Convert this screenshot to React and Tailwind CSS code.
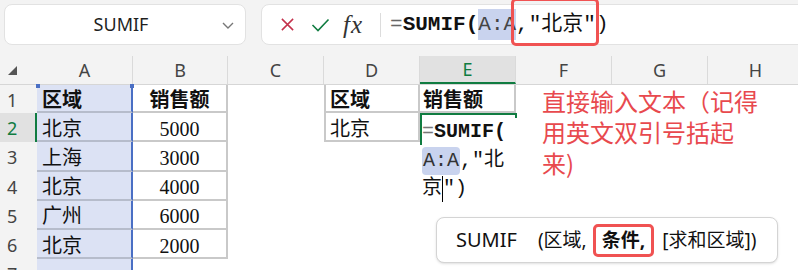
import React from "react";

const serif = "font-['Liberation_Serif','Noto_Sans_CJK_SC',serif]";
const mono = "font-['Liberation_Mono','Noto_Sans_CJK_SC',monospace]";
const sans = "font-['Noto_Sans','Noto_Sans_CJK_SC',sans-serif]";

const COLS = [
  { key: "A", w: "w-[96px]" },
  { key: "B", w: "w-[95px]" },
  { key: "C", w: "w-[96px]" },
  { key: "D", w: "w-[96px]" },
  { key: "E", w: "w-[96px]" },
  { key: "F", w: "w-[96px]" },
  { key: "G", w: "w-[96px]" },
  { key: "H", w: "w-[96px]" },
];

const ROWS = [
  { n: 1, h: "h-[28px]", A: "区域", B: "销售额", D: "区域", E: "销售额" },
  { n: 2, h: "h-[29.25px]", A: "北京", B: "5000", D: "北京" },
  { n: 3, h: "h-[29.25px]", A: "上海", B: "3000" },
  { n: 4, h: "h-[29.25px]", A: "北京", B: "4000" },
  { n: 5, h: "h-[29.25px]", A: "广州", B: "6000" },
  { n: 6, h: "h-[29.25px]", A: "北京", B: "2000" },
  { n: 7, h: "h-[29.25px]" },
];

function TopBar() {
  return (
    <div className="flex h-[56px] bg-[#f3f3f3] pt-[4px] pl-[4px]">
      {/* name box */}
      <div className="flex h-[41px] w-[242px] shrink-0 items-center rounded-[8px] border border-[#e2e2e2] bg-white">
        <span className={`${sans} flex-1 pl-[16px] text-center text-[18px] text-[#1f1f1f]`}>SUMIF</span>
        <svg className="mr-[10px]" width="14" height="10" viewBox="0 0 14 10">
          <path d="M2 3 L7 8 L12 3" fill="none" stroke="#777" strokeWidth="1.4" />
        </svg>
      </div>
      {/* formula bar */}
      <div className="ml-[15px] flex h-[41px] w-[600px] shrink-0 items-center rounded-[8px] border border-[#e2e2e2] bg-white">
        <svg className="ml-[18px]" width="15" height="15" viewBox="0 0 16 16">
          <path d="M2 2 L14 14 M14 2 L2 14" stroke="#c4314b" strokeWidth="1.6" />
        </svg>
        <svg className="ml-[16px]" width="19" height="16" viewBox="0 0 19 16">
          <path d="M1.5 8 L7 13.5 L17.5 2.5" fill="none" stroke="#107c41" strokeWidth="1.6" />
        </svg>
        <span className="ml-[13px] font-['Liberation_Serif',serif] text-[25px] italic leading-none text-[#333] tracking-[1px]">fx</span>
        <div className="ml-[17px] h-[24px] w-px bg-[#dcdcdc]" />
        <div className={`${mono} ml-[9px] flex items-center text-[21px] text-[#111]`}>
          <span className="text-[#666] font-normal">=</span>
          <span className="font-bold">SUMIF(</span>
          <span className="bg-[#c9d3ee] text-[#444]">A:A</span>
          <span className="relative">
            ,"北京"
            <span className="absolute -top-[11px] -bottom-[6px] -left-[5px] -right-[3px] rounded-[5px] border-[3px] border-[#f05252]" />
          </span>
          <span>)</span>
        </div>
      </div>
    </div>
  );
}

function HeaderRow() {
  return (
    <div className="flex h-[29px] border-b border-[#d6d6d6] bg-[#f3f3f3]">
      <div className="flex w-[37px] shrink-0 items-end pb-[9px] pl-[8px]">
        <svg width="9" height="9" viewBox="0 0 9 9">
          <polygon points="9,0 9,9 0,9" fill="#555" />
        </svg>
      </div>
      {COLS.map((c) => {
        const active = c.key === "E";
        return (
          <div
            key={c.key}
            className={`${c.w} ${sans} flex shrink-0 items-center justify-center border-r border-[#dadada] text-[18px] ${
              active ? "border-b-2 border-b-[#107c41] bg-[#e1e1e1] text-[#107c41]" : "text-[#444]"
            }`}
          >
            {c.key}
          </div>
        );
      })}
    </div>
  );
}

function Cell({ row, col }) {
  const v = row[col.key];
  const bold = row.n === 1;
  const text = `${serif} text-[20px] text-[#111] ${bold ? "font-bold" : ""}`;

  if (col.key === "A") {
    return (
      <div
        className={`${col.w} relative flex shrink-0 items-center bg-[#dce2f4] pl-[5px] pt-[4px] border-r-2 border-r-[#4a6fc4] ${
          row.n <= 6 ? "border-b-2 border-b-[#b6bccb]" : ""
        } ${text}`}
      >
        {v}
        {row.n === 1 && (
          <>
            <span className="absolute -left-[1px] -top-[1px] h-[4px] w-[4px] bg-[#4a6fc4]" />
            <span className="absolute -right-[3px] -top-[1px] h-[4px] w-[4px] bg-[#4a6fc4]" />
          </>
        )}
      </div>
    );
  }

  if (col.key === "B" && row.n <= 6) {
    return (
      <div className={`${col.w} flex shrink-0 items-center justify-center border-r-2 border-b-2 border-[#c9c9c9] pt-[4px] ${text}`}>
        {v}
      </div>
    );
  }

  if (col.key === "D" && row.n <= 2) {
    return (
      <div className={`${col.w} flex shrink-0 items-center border-l-2 border-r-2 border-b-2 border-[#c9c9c9] pl-[4px] pt-[4px] ${text}`}>
        {v}
      </div>
    );
  }

  if (col.key === "E" && row.n === 1) {
    return (
      <div className={`${col.w} flex shrink-0 items-center border-r-2 border-b-2 border-[#c9c9c9] pl-[3px] pt-[4px] ${text}`}>
        {v}
      </div>
    );
  }

  if (col.key === "E" && row.n === 2) {
    return (
      <div className={`${col.w} relative z-10 shrink-0`}>
        <div className="absolute left-0 top-0 h-[32px] w-[97px] border-2 border-[#107c41]" />
        <span className="absolute -bottom-[6px] -right-[4px] h-[6px] w-[6px] bg-[#107c41] outline outline-1 outline-white" />
        <div className={`${mono} absolute left-[2px] top-[5px] w-[110px] bg-white text-[20px] leading-[28.5px] text-[#111]`}>
          <div>
            <span className="text-[#777]">=</span>
            <span className="font-bold">SUMIF(</span>
          </div>
          <div className="flex items-center">
            <span className="rounded-[4px] bg-[#c9d3ee] px-[1px] text-[#333]">A:A</span>
            <span>,"北</span>
          </div>
          <div className="flex items-center">
            <span>京</span>
            <span className="h-[26px] w-px bg-black" />
            <span>")</span>
          </div>
        </div>
      </div>
    );
  }

  return <div className={`${col.w} shrink-0`} />;
}

function Sheet() {
  return (
    <div className="relative">
      <HeaderRow />
      {ROWS.map((row) => {
        const active = row.n === 2;
        return (
          <div key={row.n} className={`flex ${row.h}`}>
            <div
              className={`${sans} flex w-[37px] shrink-0 items-center pl-[7px] pt-[2px] text-[18px] ${
                active ? "border-r-2 border-[#107c41] bg-[#e1e1e1] text-[#107c41]" : "bg-[#f3f3f3] text-[#444]"
              }`}
            >
              {row.n}
            </div>
            {COLS.map((c) => (
              <Cell key={c.key} row={row} col={c} />
            ))}
          </div>
        );
      })}

      {/* annotation */}
      <div className="absolute left-[542px] top-[29px] z-20 font-['Noto_Sans_CJK_SC',sans-serif] text-[24px] leading-[31px] text-[#e8494e]">
        <div>直接输入文本（记得</div>
        <div>用英文双引号括起</div>
        <div>来)</div>
      </div>

      {/* function tooltip */}
      <div className="absolute left-[436px] top-[161px] z-20 flex h-[46px] w-[342px] items-center rounded-[8px] border border-[#d4d4d4] bg-white pl-[19px] text-[19px] text-[#111] shadow-sm font-['Noto_Sans','Noto_Sans_CJK_SC',sans-serif]">
        <span className="text-[20px]">SUMIF</span>
        <span className="ml-[21px]">(区域,</span>
        <span className="ml-[6px] flex h-[33px] items-center rounded-[5px] border-[3px] border-[#f05252] bg-white px-[6px] font-bold">
          条件,
        </span>
        <span className="ml-[8px]">[求和区域])</span>
      </div>
    </div>
  );
}

export default function App() {
  return (
    <div className="h-[270px] w-[798px] overflow-hidden bg-white">
      <TopBar />
      <Sheet />
    </div>
  );
}
